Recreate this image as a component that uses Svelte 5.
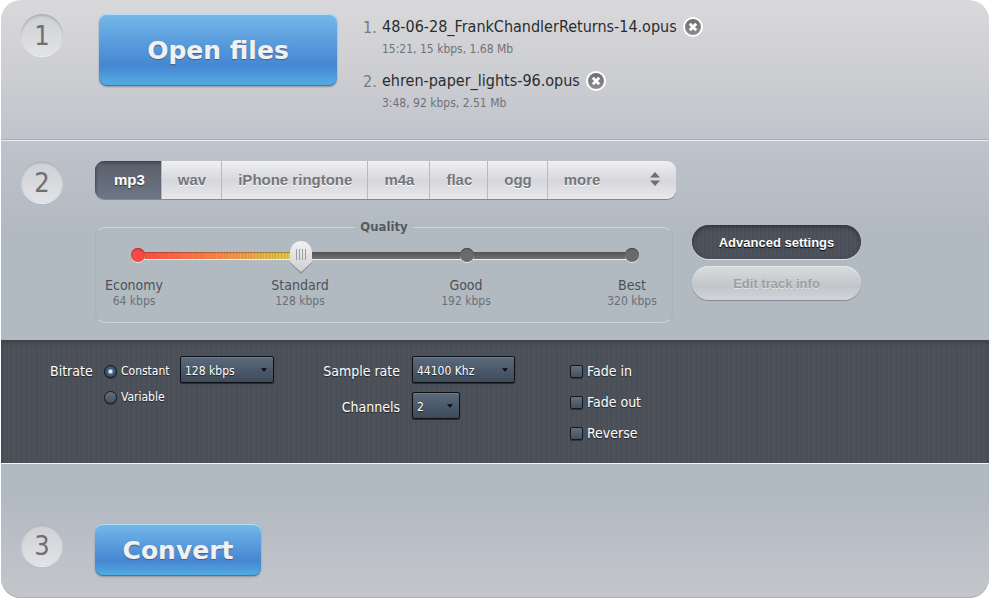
<script>
  /**
   * Audio converter: pick files, choose format and quality, convert
   */
  let files = $state([
    { name: '48-06-28_FrankChandlerReturns-14.opus', info: '15:21, 15 kbps, 1.68 Mb' },
    { name: 'ehren-paper_lights-96.opus', info: '3:48, 92 kbps, 2.51 Mb' },
  ])

  const formats = ['mp3', 'wav', 'iPhone ringtone', 'm4a', 'flac', 'ogg']
  const presets = [
    { label: 'Economy', rate: 64 },
    { label: 'Standard', rate: 128 },
    { label: 'Good', rate: 192 },
    { label: 'Best', rate: 320 },
  ]
  const effects = ['Fade in', 'Fade out', 'Reverse']

  let format = $state('mp3')
  let quality = $state(33)
  let showAdvanced = $state(true)
  let mode = $state('constant')
  let bitrate = $state('128 kbps')
  let sampleRate = $state('44100 Khz')
  let channels = $state('2')

  function removeFile(file) {
    files = files.filter((f) => f.name !== file.name)
  }
</script>

<main class="converter">
  <section class="step step-open">
    <span class="badge">1</span>
    <button class="primary open">Open files</button>
    <ol class="files">
      {#each files as file, i (file.name)}
        <li>
          <span class="index">{i + 1}.</span>
          <span class="name">{file.name}</span>
          <button class="remove" aria-label="Remove {file.name}" onclick={() => removeFile(file)}>
            <svg viewBox="0 0 20 20">
              <defs>
                <linearGradient id="disc-{i}" x2="0" y2="1">
                  <stop stop-color="#6c6c6e" />
                  <stop offset="1" stop-color="#8f8f91" />
                </linearGradient>
              </defs>
              <circle cx="10" cy="10" r="9" fill="url(#disc-{i})" stroke="#fff" stroke-width="2" />
              <path d="M6.800 6.800l6.400 6.400M13.200 6.800l-6.400 6.400" stroke="#fff" stroke-width="2.800" />
            </svg>
          </button>
          <span class="info">{file.info}</span>
        </li>
      {/each}
    </ol>
  </section>

  <section class="step step-format">
    <span class="badge">2</span>
    <div class="settings">
      <div class="tabs">
        {#each formats as item}
          <button class="tab" class:active={format === item} onclick={() => (format = item)}>{item}</button>
        {/each}
        <button class="tab more">
          more
          <svg viewBox="0 0 12 14" fill="#6f6f74">
            <path d="M1 5.5L6 0l5 5.5zM1 8.5h10L6 14z" />
          </svg>
        </button>
      </div>

      <div class="options">
        <fieldset class="quality">
          <legend>Quality</legend>
          <div class="slider">
            <div class="track"><div class="fill" style:width="{quality}%"></div></div>
            <div class="stops">
              {#each presets as preset}
                <span class="stop" class:first={preset.rate === 64}></span>
              {/each}
            </div>
            <input type="range" min="0" max="100" bind:value={quality} aria-label="Quality" />
          </div>
          <div class="presets">
            {#each presets as preset}
              <div class="preset">
                <span>{preset.label}</span>
                <small>{preset.rate} kbps</small>
              </div>
            {/each}
          </div>
        </fieldset>

        <div class="actions">
          <button class="pill dark" onclick={() => (showAdvanced = !showAdvanced)}>Advanced settings</button>
          <button class="pill light" disabled>Edit track info</button>
        </div>
      </div>
    </div>
  </section>

  {#if showAdvanced}
    <section class="advanced">
      <div class="bitrate">
        <span class="label">Bitrate</span>
        <div class="modes">
          <label><input type="radio" name="mode" value="constant" bind:group={mode} />Constant</label>
          <label><input type="radio" name="mode" value="variable" bind:group={mode} />Variable</label>
        </div>
        <select class="wide" bind:value={bitrate} aria-label="Bitrate">
          <option>64 kbps</option>
          <option>128 kbps</option>
          <option>192 kbps</option>
          <option>320 kbps</option>
        </select>
      </div>

      <div class="sampling">
        <label for="rate">Sample rate</label>
        <select id="rate" class="wider" bind:value={sampleRate}>
          <option>44100 Khz</option>
          <option>48000 Khz</option>
        </select>
        <label for="channels">Channels</label>
        <select id="channels" class="narrow" bind:value={channels}>
          <option>1</option>
          <option>2</option>
        </select>
      </div>

      <div class="effects">
        {#each effects as effect}
          <label><input type="checkbox" />{effect}</label>
        {/each}
      </div>
    </section>
  {/if}

  <section class="step step-convert">
    <span class="badge">3</span>
    <button class="primary convert">Convert</button>
  </section>
</main>

<style>
  :global(body) {
    margin: 0;
    background: #fff;
  }

  .converter {
    margin: 0 1px;
    border-radius: 20px;
    overflow: hidden;
    font-family: Tahoma, 'DejaVu Sans Condensed', 'Noto Sans', sans-serif;
    font-size: 14px;
    background: linear-gradient(#d9d9db 0, #cccdd1 80px, #bfc3cc 140px, #b2bac1 230px, #b2bac1 500px, #bcc0c8 550px, #c3c6c9 100%);
    box-shadow: inset 0 -1px 0 #adb1b5;
  }

  button {
    border: 0;
    padding: 0;
    font-family: inherit;
    cursor: pointer;
  }

  .step {
    display: flex;
    align-items: flex-start;
    padding: 0 20px;
  }

  .step-open {
    min-height: 125px;
    padding-top: 14px;
    border-bottom: 1px solid #a9adb6;
  }

  .step-format {
    border-top: 1px solid #eceef2;
    padding-top: 20px;
    padding-bottom: 17px;
  }

  .step-convert {
    padding-top: 60px;
    padding-bottom: 22px;
  }

  .badge {
    flex: none;
    width: 42px;
    height: 42px;
    margin-right: 32px;
    border-radius: 50%;
    background: linear-gradient(#cdd0d4, #e2e3e6);
    box-shadow: inset 0 2px 2px #aeb1b6, 0 1px 0 #eeeff1;
    color: #6f6f71;
    font-size: 27px;
    line-height: 44px;
    text-align: center;
  }

  .primary {
    border-radius: 8px;
    background: linear-gradient(#75b9e9, #5c9fde 35%, #4686d2 72%, #52a9df 96%);
    box-shadow: inset 0 1px 0 #b5dcf6, inset 0 -1px 0 #3a7ab5, 0 1px 2px #8a93a0;
    color: #f1f1f2;
    font-family: Verdana, 'DejaVu Sans', sans-serif;
    font-size: 25px;
    font-weight: bold;
    text-shadow: 0 1px 1px #4b5f80;
  }

  .open {
    width: 238px;
    height: 72px;
    margin-left: 4px;
  }

  .convert {
    width: 166px;
    height: 52px;
  }

  .files {
    margin: 1px 0 0 26px;
    padding: 0;
    list-style: none;
  }

  .files li {
    display: grid;
    grid-template-columns: 19px auto 1fr;
    align-items: center;
    margin-bottom: 10px;
  }

  .index {
    color: #77797d;
    font-size: 16px;
  }

  .name {
    color: #2b2c30;
    font-size: 16px;
    line-height: 24px;
  }

  .remove {
    width: 20px;
    height: 20px;
    margin-left: 6px;
    background: none;
  }

  .remove svg {
    display: block;
  }

  .info {
    grid-column: 2 / 4;
    color: #707277;
    font-size: 12px;
    line-height: 20px;
  }

  .tabs {
    display: inline-flex;
    height: 38px;
    border-radius: 9px;
    overflow: hidden;
    box-shadow: 0 1px 0 #85898e;
  }

  .tab {
    padding: 0 15px 2px 16px;
    border-left: 1px solid #b9bac0;
    background: linear-gradient(#f0f0f2, #d6d7dc 52%, #e9e9ec);
    color: #74757a;
    font-family: 'Liberation Sans', Arial, sans-serif;
    font-size: 15px;
    font-weight: bold;
    text-shadow: 0 1px 0 #fff;
  }

  .tab:first-child {
    padding: 0 16px 2px 19px;
    border-left: 0;
  }

  .tab.active {
    background: linear-gradient(#595e69, #6d7787);
    box-shadow: inset 1px 2px 3px #40444e;
    color: #fff;
    text-shadow: 0 1px 1px #30333a;
  }

  .more {
    display: flex;
    align-items: center;
    justify-content: space-between;
    width: 129px;
  }

  .more svg {
    width: 12px;
    height: 14px;
  }

  .options {
    display: flex;
    align-items: flex-start;
    gap: 19px;
    margin-top: 19px;
  }

  .quality {
    width: 578px;
    height: 105px;
    box-sizing: border-box;
    margin: 0;
    padding: 2px 0 0;
    border: 1px solid #aab0b8;
    border-top-color: #cdd3da;
    border-bottom-color: #cdd3da;
    border-radius: 10px;
  }

  .quality legend {
    margin: 0 auto;
    padding: 0 5px;
    color: #55595f;
    font-size: 13px;
    font-weight: bold;
    line-height: 18px;
  }

  /* track, stops and the range input share one grid cell */
  .slider {
    display: grid;
    align-items: center;
    margin: 0 29px 0 31px;
  }

  .slider > * {
    grid-area: 1 / 1;
  }

  .track {
    height: 7px;
    margin: 0 11px;
    background: linear-gradient(#515151, #707070);
    box-shadow: 0 1px 0 #eef0f2;
  }

  .fill {
    height: 100%;
    background:
      repeating-linear-gradient(90deg, transparent 0 2px, rgba(190, 60, 40, 0.18) 2px 3px),
      linear-gradient(90deg, #ff4b45, #f58a48 50%, #cfd84c);
    box-shadow: inset 0 1px 1px rgba(90, 40, 20, 0.4);
  }

  .stops {
    display: flex;
    justify-content: space-between;
    margin: 0 4px;
  }

  .stop {
    width: 14px;
    height: 14px;
    border-radius: 50%;
    background: #6a6a6a;
    box-shadow: inset 0 1px 1px #444, 0 1px 0 #e3e6e9;
  }

  .stop.first {
    background: #fb4a44;
    box-shadow: inset 0 1px 2px #8e3431, 0 1px 0 #e3e6e9;
  }

  input[type='range'] {
    appearance: none;
    width: 100%;
    height: 34px;
    margin: 0;
    background: none;
  }

  input[type='range']::-webkit-slider-thumb {
    appearance: none;
    width: 24px;
    height: 34px;
    margin-top: 4px;
    background: url("data:image/svg+xml,%3Csvg xmlns='http://www.w3.org/2000/svg' viewBox='0 0 24 34'%3E%3Cdefs%3E%3ClinearGradient id='g' x2='0' y2='1'%3E%3Cstop stop-color='%23f2f2f3'/%3E%3Cstop offset='1' stop-color='%23cfcfd1'/%3E%3C/linearGradient%3E%3C/defs%3E%3Cpath d='M1 12a11 11 0 0 1 22 0v11L12 34 1 23z' fill='%23808489' fill-opacity='.7'/%3E%3Cpath d='M1 12a11 11 0 0 1 22 0v10L12 32 1 22z' fill='url(%23g)'/%3E%3Cpath d='M7.500 9v11M10.500 9v11M13.500 9v11M16.500 9v11' stroke='%239b9b9d'/%3E%3C/svg%3E") center / contain no-repeat;
  }

  .presets {
    display: flex;
    justify-content: space-between;
    margin: 5px 2px 0 0;
  }

  .preset {
    width: 76px;
    color: #4d5157;
    line-height: 16px;
    text-align: center;
  }

  .preset span,
  .preset small {
    display: block;
  }

  .preset small {
    color: #6b7077;
    font-size: 12px;
  }

  .actions {
    display: flex;
    flex-direction: column;
    gap: 7px;
    padding-top: 7px;
  }

  .pill {
    width: 169px;
    height: 34px;
    border-radius: 17px;
    font-family: 'Liberation Sans', Arial, sans-serif;
    font-size: 13px;
    font-weight: bold;
  }

  .pill.dark {
    background: repeating-linear-gradient(90deg, #494e57 0 2px, #4e535d 2px 4px);
    box-shadow: inset 0 2px 4px #30343b, 0 1px 0 #dde0e4;
    color: #fff;
    text-shadow: 0 1px 1px #000;
  }

  .pill.light {
    background: linear-gradient(#d9dddf, #c2c5c9 60%, #d2d5d8);
    box-shadow: inset 0 1px 0 #e6e8ea, 0 1px 1px #858a90;
    color: #9b9fa4;
    text-shadow: 0 1px 0 #e1e4e6;
  }

  .advanced {
    display: flex;
    align-items: flex-start;
    min-height: 107px;
    padding: 16px 20px 0 49px;
    border-bottom: 1px solid #f3f4f6;
    background: repeating-linear-gradient(90deg, #4a4f57 0 2px, #4f545c 2px 3px, #4c5159 3px 5px);
    box-shadow: inset 0 3px 4px #3f434b;
    color: #fff;
    line-height: 30px;
    text-shadow: 0 1px 1px #222;
  }

  .bitrate {
    display: flex;
    width: 275px;
  }

  .label {
    width: 54px;
  }

  .modes {
    display: flex;
    flex-direction: column;
    width: 76px;
    padding-top: 2px;
    font-size: 12px;
    line-height: 26px;
  }

  .modes label,
  .effects label {
    display: flex;
    align-items: center;
    gap: 4px;
  }

  input[type='radio'],
  input[type='checkbox'] {
    appearance: none;
    width: 13px;
    height: 13px;
    margin: 0;
    border: 1px solid #15181c;
    background: linear-gradient(#64707f, #44505f);
    box-shadow: 0 1px 1px #30343a;
  }

  input[type='radio'] {
    border-radius: 50%;
  }

  input[type='radio']:checked {
    background: radial-gradient(circle, #e6f4ff 0 1px, #405d7d 3px, #3b4b5e 6px);
  }

  input[type='checkbox'] {
    border-radius: 2px;
  }

  input[type='checkbox']:checked {
    background: #a9c3de;
  }

  select {
    appearance: none;
    height: 27px;
    padding: 2px 4px 0;
    border: 1px solid #0d1014;
    border-radius: 2px;
    background:
      url("data:image/svg+xml,%3Csvg xmlns='http://www.w3.org/2000/svg' viewBox='0 0 7 4'%3E%3Cpath d='M0 0h7L3.500 4z' fill='%23090b0e'/%3E%3C/svg%3E") right 6px center / 6px 4px no-repeat,
      linear-gradient(#5b6a7c, #3d4a5a);
    box-shadow: inset 0 1px 0 #6d7c8e, 0 1px 1px #25292f;
    color: #fff;
    font-family: inherit;
    font-size: 12px;
    text-shadow: inherit;
  }

  .wide {
    width: 94px;
  }

  .wider {
    width: 103px;
  }

  .narrow {
    width: 48px;
  }

  .sampling {
    display: grid;
    grid-template-columns: 75px 103px;
    gap: 6px 12px;
    justify-items: end;
    white-space: nowrap;
  }

  .sampling select {
    justify-self: start;
  }

  .effects {
    margin-left: 55px;
    line-height: 31px;
  }
</style>
